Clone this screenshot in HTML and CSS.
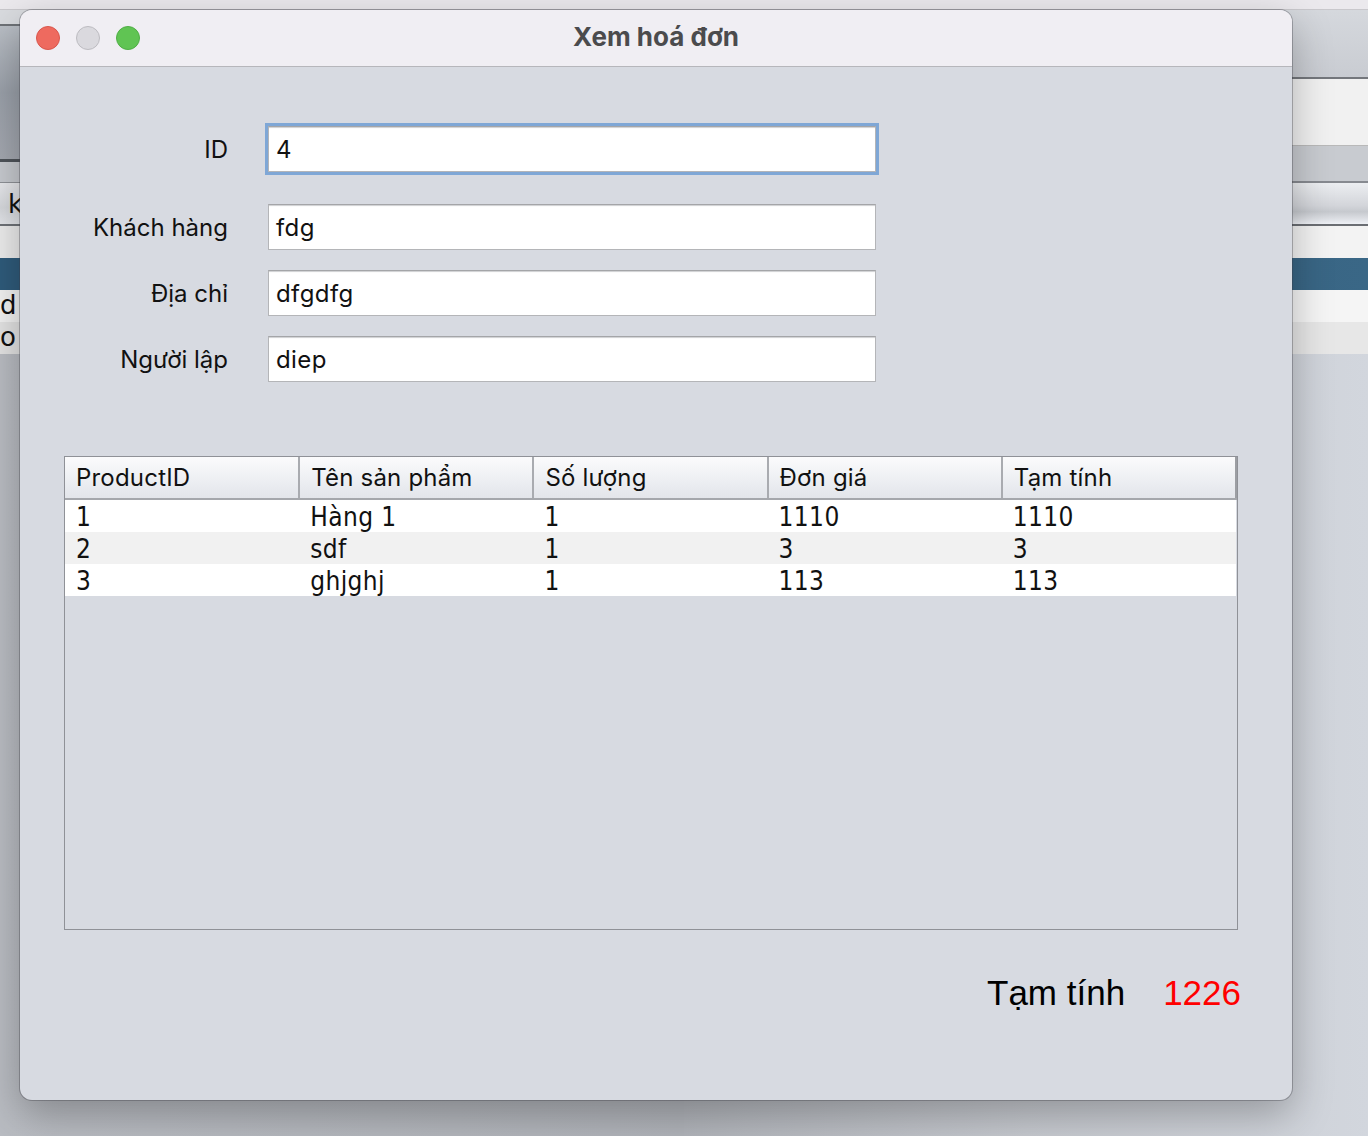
FILE: index.html
```html
<!DOCTYPE html>
<html lang="vi">
<head>
<meta charset="utf-8">
<title>Xem hoá đơn</title>
<link rel="stylesheet" href="styles.css">
</head>
<body>
<div class="desktop">
  <div class="bg-app">
    <div class="bg-top"></div>
    <div class="bg-cols">
      <div class="bg-left">
        <div class="s l-a"></div>
        <div class="s l-toolbar"></div>
        <div class="s l-line"></div>
        <div class="s l-b"></div>
        <div class="s l-search"><span class="bg-text">k</span></div>
        <div class="s l-row1"></div>
        <div class="s row-sel"></div>
        <div class="s l-row2"><span class="bg-text">d</span></div>
        <div class="s l-row3"><span class="bg-text">o</span></div>
        <div class="s l-rest"></div>
      </div>
      <div class="bg-right">
        <div class="s r-a"></div>
        <div class="s r-b"></div>
        <div class="s r-c"></div>
        <div class="s r-gloss"></div>
        <div class="s r-row1"></div>
        <div class="s row-sel r-sel"></div>
        <div class="s r-row2"></div>
        <div class="s r-row3"></div>
        <div class="s r-rest"></div>
      </div>
    </div>
  </div>

  <div class="dialog">
    <div class="titlebar">
      <div class="lights">
        <span class="light red"></span>
        <span class="light gray"></span>
        <span class="light green"></span>
      </div>
      <div class="title">Xem hoá đơn</div>
    </div>
    <div class="body">
      <div class="form">
        <label class="lbl lbl-id">ID</label>
        <div class="field focused">4</div>
        <label class="lbl">Khách hàng</label>
        <div class="field">fdg</div>
        <label class="lbl">Địa chỉ</label>
        <div class="field">dfgdfg</div>
        <label class="lbl">Người lập</label>
        <div class="field">diep</div>
      </div>

      <div class="table-wrap">
        <table class="grid">
          <thead>
            <tr>
              <th>ProductID</th>
              <th>Tên sản phẩm</th>
              <th>Số lượng</th>
              <th>Đơn giá</th>
              <th>Tạm tính</th>
            </tr>
          </thead>
          <tbody>
            <tr><td>1</td><td>Hàng 1</td><td>1</td><td>1110</td><td>1110</td></tr>
            <tr class="alt"><td>2</td><td>sdf</td><td>1</td><td>3</td><td>3</td></tr>
            <tr><td>3</td><td>ghjghj</td><td>1</td><td>113</td><td>113</td></tr>
          </tbody>
        </table>
      </div>

      <div class="total">
        <span class="total-label">Tạm tính</span>
        <span class="total-value">1226</span>
      </div>
    </div>
  </div>
</div>
</body>
</html>
```

FILE: styles.css
```css
* { box-sizing: border-box; }
html, body { margin: 0; padding: 0; }
body {
  width: 1368px;
  height: 1136px;
  overflow: hidden;
  font-family: "Inter", "Noto Sans", sans-serif;
}
.desktop {
  position: relative;
  width: 1368px;
  height: 1136px;
  background: #a9acb2;
}

/* ---------- background application ---------- */
.bg-app { display: flex; flex-direction: column; height: 100%; }
.bg-top { height: 10px; background: #ebe9ed; border-bottom: 1px solid #c9c8cc; }
.bg-cols { flex: 1; display: flex; }
.bg-left, .bg-right { flex: 1; display: flex; flex-direction: column; }
.s { flex: none; }
.bg-text {
  font-family: "DejaVu Sans", sans-serif;
  font-size: 26px;
  color: #111;
  line-height: 1;
}
.l-a { height: 16px; background: #d9dbdf; border-bottom: 2px solid #6e7277; }
.l-toolbar { height: 133px; background: linear-gradient(#b9bec5, #9aa0a9 50%, #a4a8b0); }
.l-line { height: 3px; background: #4f545a; }
.l-b { height: 21px; background: #c7cacf; border-bottom: 1px solid #8f9297; }
.l-search {
  height: 43px;
  background: linear-gradient(#e8e9ec, #d6d8dc 60%, #e4e6ea);
  border-bottom: 2px solid #6f7378;
  padding: 8px 0 0 8px;
}
.l-row1 { height: 32px; background: #ececec; }
.row-sel { height: 32px; background: #2f5b7b; }
.l-row2 { height: 32px; background: #f2f2f2; padding-top: 2px; }
.l-row3 { height: 32px; background: #e3e3e3; padding-top: 2px; }
.l-rest { flex: 1; background: linear-gradient(90deg, #b9bcc2, #b0b3b9); }

.r-a { height: 69px; background: linear-gradient(#d5d8dd, #c9ccd2); border-bottom: 2px solid #74777c; }
.r-b { height: 67px; background: #f1f1f1; border-bottom: 1px solid #b9b9b9; }
.r-c { height: 37px; background: #c8cbd0; border-bottom: 2px solid #878a90; }
.r-gloss {
  height: 43px;
  background: linear-gradient(#eceef1, #d3d5da 55%, #c6c9ce 70%, #eef0f5);
  border-bottom: 2px solid #6b6e73;
}
.r-row1 { height: 32px; background: #f3f3f3; }
.r-sel { background: linear-gradient(90deg, #2f5a79, #3a6786); }
.r-row2 { height: 32px; background: #f5f5f5; }
.r-row3 { height: 32px; background: #e7e7e7; }
.r-rest { flex: 1; background: linear-gradient(90deg, #b1b4ba, #c6c9cf 50%, #d2d6dd); }

/* ---------- dialog ---------- */
.dialog {
  position: absolute;
  left: 20px;
  top: 10px;
  width: 1272px;
  height: 1090px;
  border-radius: 12px;
  overflow: hidden;
  background: #d7dae1;
  box-shadow: 0 0 0 1px rgba(60, 60, 70, 0.35), 0 14px 40px rgba(0, 0, 0, 0.28);
  display: flex;
  flex-direction: column;
}
.titlebar {
  position: relative;
  height: 57px;
  flex: none;
  background: #f0eef3;
  border-bottom: 1px solid #b6b6bb;
  display: flex;
  align-items: center;
  justify-content: center;
}
.lights {
  position: absolute;
  left: 16px;
  top: 16px;
  display: flex;
  gap: 16px;
}
.light {
  width: 24px;
  height: 24px;
  border-radius: 50%;
}
.light.red { background: #ee6a5f; border: 1px solid #d9564c; }
.light.gray { background: #dad9de; border: 1px solid #bdbcc1; }
.light.green { background: #60c453; border: 1px solid #4fae45; }
.title {
  font-family: "Inter", sans-serif;
  font-weight: 700;
  font-size: 26px;
  color: #4b4b4d;
  margin-top: -3px;
}

.body {
  flex: 1;
  display: flex;
  flex-direction: column;
}

.form {
  display: grid;
  grid-template-columns: 208px 608px;
  column-gap: 40px;
  row-gap: 20px;
  padding-top: 59px;
  align-items: center;
}
.lbl {
  text-align: right;
  font-size: 24px;
  color: #111;
}
.field {
  height: 46px;
  background: #fff;
  border: 1px solid #b4b5b8;
  border-top-color: #a4a5a8;
  box-shadow: inset 0 2px 1px -1px #cfd0d2;
  font-size: 24px;
  color: #111;
  padding: 0 0 0 7px;
  display: flex;
  align-items: center;
  font-family: "Inter", sans-serif;
  letter-spacing: 0.4px;
}
.field.focused {
  outline: 3px solid #7fa7d6;
  outline-offset: 0;
  margin-bottom: 12px;
}
.lbl-id { margin-bottom: 12px; }

.table-wrap {
  margin: 74px 0 0 44px;
  width: 1174px;
  height: 474px;
  border: 1px solid #8f9197;
  background: #d7dae1;
}
.grid {
  border-collapse: collapse;
  table-layout: fixed;
  width: 1172px;
}
.grid th {
  height: 42px;
  text-align: left;
  font-weight: 400;
  font-size: 24px;
  color: #111;
  padding: 0 0 0 11px;
  background: linear-gradient(#fbfbfc, #eceef2 60%, #e3e5ea);
  border-right: 2px solid #a9abb0;
  border-bottom: 2px solid #a5a7ac;
  width: 234px;
  letter-spacing: 0.2px;
}
.grid th:last-child { border-right: 2px solid #9c9ea3; }
.grid td {
  height: 32px;
  padding: 2px 0 0 11px;
  font-family: "DejaVu Sans Condensed", "DejaVu Sans", sans-serif;
  font-stretch: condensed;
  font-size: 26px;
  color: #111;
  background: #fff;
  white-space: nowrap;
  line-height: 30px;
  letter-spacing: 0.4px;
}
.grid tr.alt td { background: #f1f1f1; }

.total {
  display: flex;
  justify-content: flex-end;
  align-items: baseline;
  gap: 38px;
  margin: 43px 51px 0 0;
  font-family: "Liberation Sans", Arial, sans-serif;
  font-size: 35px;
}
.total-label { color: #000; }
.total-value { color: #ff0000; }
```
